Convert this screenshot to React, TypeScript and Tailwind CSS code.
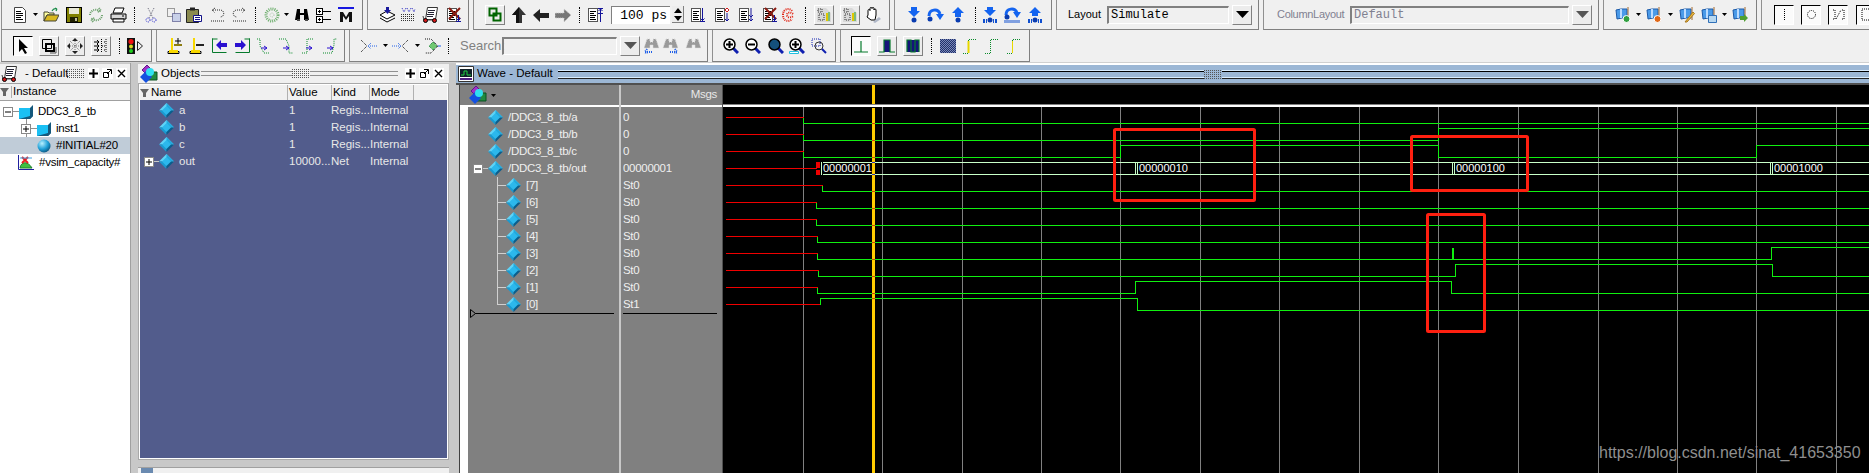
import type { ReactNode } from 'react';

type IcoProps = { className?: string; w?: number; h?: number; children?: ReactNode };
type P = { className?: string };

function Ico({ className = '', w = 16, h = 16, children }: IcoProps) {
  return (
    <svg width={w} height={h} viewBox={`0 0 ${w} ${h}`} className={`shrink-0 ${className}`} fill="none">
      {children}
    </svg>
  );
}

const dots = '1 1';

function Caret({ className = '' }: P) {
  return (
    <svg width="5" height="3" viewBox="0 0 5 3" className={`shrink-0 ${className}`}>
      <path d="M0 0h5L2.5 3z" fill="#000" />
    </svg>
  );
}

function Sep({ className = '' }: P) {
  return <div className={`h-[16px] w-px shrink-0 border-l border-dotted border-black ${className}`} />;
}

function Raised({ className = '', children }: { className?: string; children?: ReactNode }) {
  return (
    <div className={`flex h-[20px] w-[20px] shrink-0 items-center justify-center border border-t-white border-l-white border-r-[#808080] border-b-[#808080] bg-[#ececec] ${className}`}>
      {children}
    </div>
  );
}

function Pressed({ className = '', children }: { className?: string; children?: ReactNode }) {
  return (
    <div className={`flex h-[20px] w-[20px] shrink-0 items-center justify-center border border-t-black border-l-black border-r-white border-b-white bg-[#fbfbfb] ${className}`}>
      {children}
    </div>
  );
}

function ListDoc({ className = '', children }: { className?: string; children?: ReactNode }) {
  return (
    <Ico className={className}>
      <path d="M1.5 1.5h9v13h-9z" fill="#fff" stroke="#555" shapeRendering="crispEdges" />
      <path d="M3 4.5h6M3 6.5h4M3 8.5h6M3 10.5h5M3 12.5h6" stroke="#000" shapeRendering="crispEdges" />
      {children}
    </Ico>
  );
}

const NewDoc = ({ className }: P) => (
  <Ico className={className}>
    <path d="M2.5.5h8l3 3v12h-11z" fill="#fff" stroke="#444" />
    <path d="M4 4.5h5M4 6.5h7M4 8.5h7M4 10.5h5M4 12.5h7" stroke="#000" shapeRendering="crispEdges" />
  </Ico>
);
const OpenFolder = ({ className }: P) => (
  <Ico className={className}>
    <path d="M1 5h4l1 1h5v2H4l-3 6z" fill="#ffffa0" stroke="#443" />
    <path d="M1 14l3-6h12l-3 6z" fill="#d8b820" stroke="#443" />
    <path d="M9 4c1-2 3-3 5-2M14 2l-2-1M14 2l-1 2" stroke="#168a44" strokeWidth="1.2" />
  </Ico>
);
const Save = ({ className }: P) => (
  <Ico className={className}>
    <path d="M.5.5h15v15H.5z" fill="#808000" stroke="#000" shapeRendering="crispEdges" />
    <path d="M3 1h10v6H3z" fill="#e8e8d8" />
    <path d="M4 10h8v5H4z" fill="#202000" />
    <path d="M9 11h2v3H9z" fill="#c0c0a0" />
  </Ico>
);
const Refresh = ({ className }: P) => (
  <Ico className={className}>
    <path d="M2 8c0-4 5-7 10-4M11 1l2 3-4 1M14 8c0 4-5 7-10 4M5 15l-2-3 4-1" stroke="#6aa06a" strokeWidth="2" strokeDasharray={dots} />
  </Ico>
);
const Printer = ({ className }: P) => (
  <Ico className={className} w={17}>
    <path d="M5 1h9l-2 5H3z" fill="#fff" stroke="#000" />
    <path d="M1 7h15v5H1z" fill="#d8d8d8" stroke="#000" />
    <path d="M3 12h11v3H3z" fill="#fff" stroke="#000" />
    <path d="M12 9h2" stroke="#000" />
  </Ico>
);
const Cut = ({ className }: P) => (
  <Ico className={className}>
    <path d="M5 1l5 10M11 1L6 11" stroke="#667" strokeDasharray={dots} />
    <circle cx="5" cy="13" r="2" stroke="#22c" strokeDasharray={dots} />
    <circle cx="11" cy="13" r="2" stroke="#22c" strokeDasharray={dots} />
  </Ico>
);
const Copy = ({ className }: P) => (
  <Ico className={className}>
    <path d="M1.5 1.5h7v8h-7z" stroke="#444" strokeDasharray={dots} />
    <path d="M6.5 6.5h8v8h-8z" fill="#c8d0e8" stroke="#226" strokeDasharray={dots} />
  </Ico>
);
const Paste = ({ className }: P) => (
  <Ico className={className} w={18}>
    <path d="M1.5 2.5h12v13h-12z" fill="#8a8a50" stroke="#222" />
    <path d="M5 .5h5v3H5z" fill="#222" />
    <path d="M8.5 8.5h8v6h-8z" fill="#fff" stroke="#118" />
    <path d="M10 10.5h5M10 12.5h5" stroke="#118" />
  </Ico>
);
const Undo = ({ className, flip }: P & { flip?: boolean }) => (
  <Ico className={className}>
    <g transform={flip ? 'translate(16 0) scale(-1 1)' : undefined}>
      <path d="M3 3h7c5 0 5 7 0 7M1 14h13" stroke="#222" strokeDasharray={dots} />
      <path d="M5 1L2 3l3 3" stroke="#222" strokeDasharray={dots} />
    </g>
  </Ico>
);
const Compile = ({ className }: P) => (
  <Ico className={className}>
    <circle cx="8" cy="8" r="6" stroke="#70b070" strokeWidth="3" strokeDasharray={dots} />
    <circle cx="8" cy="8" r="2" stroke="#a8c8a8" strokeDasharray={dots} />
  </Ico>
);
const Binoculars = ({ className }: P) => (
  <Ico className={className}>
    <path d="M3 2h3v4h4V2h3l2 11H10V8H6v5H1z" fill="#000" />
    <path d="M3 13h3M11 13h3" stroke="#444" strokeWidth="2" />
  </Ico>
);
const Hier = ({ className }: P) => (
  <Ico className={className}>
    <path d="M.5 1.5h6v6h-6zM.5 9.5h6v6h-6z" fill="#fff" stroke="#000" shapeRendering="crispEdges" />
    <path d="M2 4.5h3M3.5 3v3M2 12.5h3M3.5 11v3M7 4.5h8M7 12.5h8" stroke="#000" shapeRendering="crispEdges" />
  </Ico>
);
const MIcon = ({ className }: P) => (
  <Ico className={className}>
    <path d="M0 0h16v2H0z" fill="#1818e0" />
    <path d="M2 15V5h3l3 5 3-5h3v10h-3V9l-3 4-3-4v6z" fill="#111" />
  </Ico>
);
const Stack = ({ className }: P) => (
  <Ico className={className} w={17}>
    <path d="M1 8l7-4 8 4-8 4zM1 11l7 4 8-4" fill="#fff" stroke="#000" />
    <path d="M7 0h3v3h2L8.5 7 5 3h2z" fill="#1a1a9c" />
  </Ico>
);
const DotGrid = ({ className }: P) => (
  <Ico className={className}>
    <path d="M1 7.5h14M1 9.5h14M1 11.5h14M1 13.5h14" stroke="#333" strokeDasharray={dots} />
    <path d="M2 1l2 4 2-4M7 1l2 4 2-4M12 1l2 4 1-3" stroke="#2828c0" strokeDasharray={dots} />
  </Ico>
);
const Wheels = ({ className }: P) => (
  <Ico className={className} w={17}>
    <path d="M5.5.5h10l-2 12h-10z" fill="#fff" stroke="#333" />
    <path d="M6 3.5h7M6 5.5h6M5 7.5h7M5 9.5h6" stroke="#223" />
    <path d="M1 9l1 4h12" stroke="#444" />
    <circle cx="3.5" cy="13.5" r="2" fill="#d01818" stroke="#000" />
    <circle cx="12.5" cy="13.5" r="2" fill="#d01818" stroke="#000" />
  </Ico>
);
const XDoc = ({ className }: P) => (
  <ListDoc className={className}>
    <path d="M3 1l11 11M14 1L3 12" stroke="#8a1a10" strokeWidth="2" />
    <path d="M12.5 8v6M10 14.5h5M10.5 11.5l2 2 2-2" stroke="#14149a" />
  </ListDoc>
);
const Link = ({ className }: P) => (
  <Raised className={className}>
    <Ico w={14} h={15}>
      <path d="M1.5 1.5h7v7h-7zM5.5 6.5h7v7h-7z" stroke="#006400" strokeWidth="2" />
    </Ico>
  </Raised>
);
const UpArrow = ({ className }: P) => (
  <Ico className={className}>
    <path d="M8 0l7 8h-4v8H5V8H1z" fill="#333" />
    <path d="M8 0L1 8h4v8h3z" fill="#111" />
  </Ico>
);
const LeftArrow = ({ className }: P) => (
  <Ico className={className}>
    <path d="M0 8l7-6v4h9v5H7v4z" fill="#222" />
  </Ico>
);
const RightArrow = ({ className }: P) => (
  <Ico className={className}>
    <path d="M16 8L9 2v4H0v5h9v4z" fill="#777" stroke="#ccc" strokeDasharray={dots} />
  </Ico>
);
const DownMark = ({ c = '#14149a' }: { c?: string }) => <path d="M12.5 1v13M10 14.5h5M10.5 11.5l2 2 2-2" stroke={c} />;
const ListUp = ({ className }: P) => (
  <ListDoc className={className}>
    <path d="M13.5 1v14M11 1.5h5M11.5 4l2-2 2 2M11 6.5h5" stroke="#14149a" />
  </ListDoc>
);
const ListDown = ({ className }: P) => (
  <ListDoc className={className}>
    <DownMark />
  </ListDoc>
);
const ListDiamond = ({ className }: P) => (
  <ListDoc className={className}>
    <path d="M13 1l2 2-2 2-2-2z" fill="#fff" stroke="#d01818" />
    <path d="M13 6v8M11 12l2 2 2-2" stroke="#14149a" />
  </ListDoc>
);
const ListDouble = ({ className }: P) => (
  <ListDoc className={className}>
    <path d="M13 1v13M11 8l2 2 2-2M11 12l2 2 2-2" stroke="#14149a" />
  </ListDoc>
);
const RedC = ({ className }: P) => (
  <Ico className={className}>
    <path d="M12 4c-2-3-9-3-9 4s7 7 9 4M13 7c-2-2-6-2-6 1s4 3 6 1" stroke="#e02010" strokeWidth="2" strokeDasharray={dots} />
  </Ico>
);
const WavePage = ({ className }: P) => (
  <Raised className={className}>
    <Ico>
      <path d="M1 1h9l5 5v9H1z" fill="#d8d8d8" />
      <path d="M2 2h4v3H2zM3 7h5v6H3z" stroke="#333" strokeDasharray={dots} />
      <path d="M11 6v8" stroke="#e0c800" strokeWidth="2" />
      <path d="M13 5v9" stroke="#20a020" />
    </Ico>
  </Raised>
);
const Hand = ({ className }: P) => (
  <Ico className={className}>
    <path d="M3 8V3.5a1 1 0 012 0V1.5a1 1 0 012 0a1 1 0 012 0V3a1 1 0 012 0v5l-1 5H6L2 10z" fill="#fff" stroke="#000" />
    <path d="M8 15l6-5 2 2-6 4z" fill="#b0b8c8" />
  </Ico>
);
const StepDown = ({ className }: P) => (
  <Ico className={className}>
    <path d="M5 0h6v4h3L8 10 2 4h3z" fill="#1464f0" />
    <circle cx="8" cy="13" r="2.5" fill="#0a3cb0" />
  </Ico>
);
const StepOver = ({ className }: P) => (
  <Ico className={className} w={18}>
    <path d="M3 9c0-7 9-8 11-2" stroke="#1464f0" strokeWidth="3" />
    <path d="M10 7h8l-4 6z" fill="#1464f0" />
    <circle cx="4" cy="12" r="2.5" fill="#0a3cb0" />
  </Ico>
);
const StepUp = ({ className }: P) => (
  <Ico className={className}>
    <path d="M8 0l6 6h-3v4H5V6H2z" fill="#1464f0" />
    <circle cx="8" cy="13" r="2.5" fill="#0a3cb0" />
  </Ico>
);
const Bars = () => <path d="M1 12h2v4H1zM13 12h2v4h-2zM4 12h1v4H4zM11 12h1v4h-1z" fill="#1050d0" />;
const StepDownBar = ({ className }: P) => (
  <Ico className={className}>
    <path d="M5 0h6v3h3L8 9 2 3h3z" fill="#1464f0" />
    <circle cx="8" cy="13" r="2.5" fill="#0a3cb0" />
    <Bars />
  </Ico>
);
const StepOverBar = ({ className }: P) => (
  <Ico className={className} w={18}>
    <path d="M3 8c0-7 9-8 11-2" stroke="#1464f0" strokeWidth="3" />
    <path d="M10 5h8l-4 6z" fill="#1464f0" />
    <circle cx="4" cy="10" r="2.5" fill="#0a3cb0" />
    <path d="M2 13v3M4 13v3M6 13v3M8 13v3M10 13v3M12 13v3M14 13v3M16 13v3" stroke="#1050d0" />
  </Ico>
);
const StepUpBar = ({ className }: P) => (
  <Ico className={className}>
    <path d="M8 0l6 6h-3v3H5V6H2z" fill="#1464f0" />
    <circle cx="8" cy="13" r="2.5" fill="#0a3cb0" />
    <Bars />
  </Ico>
);
const Flag = ({ className, children }: { className?: string; children?: ReactNode }) => (
  <Ico className={className}>
    <path d="M1 3l5-1 6 0 0 9-5 0-5 1z" fill="#4a9ae8" stroke="#1c5aa8" />
    <path d="M6 2v9" stroke="#bcdcff" strokeWidth="2" />
    <path d="M13 0v13" stroke="#a06830" />
    {children}
  </Ico>
);
const PressedGlyph = ({ className, children }: { className?: string; children?: ReactNode }) => (
  <Pressed className={`w-[19px] ${className ?? ''}`}>
    <Ico w={13} h={13}>
      {children}
    </Ico>
  </Pressed>
);
const ArrowSelect = () => (
  <Ico>
    <path d="M4 1l9 9H9l3 5-2 1-3-5-3 3z" fill="#000" />
  </Ico>
);
const Resize = () => (
  <Ico>
    <path d="M1.5 1.5h9v9h-9z" stroke="#000" />
    <path d="M5 6h8v7H5z" stroke="#000" strokeWidth="2" />
    <path d="M15 9v6H9" stroke="#555" />
  </Ico>
);
const Move = () => (
  <Ico>
    <path d="M8 0l3 3H5zM8 16l3-3H5zM0 8l3-3v6zM16 8l-3-3v6z" fill="#222" />
    <path d="M8 3v10M3 8h10M3 3l10 10M13 3L3 13" stroke="#777" strokeDasharray={dots} />
  </Ico>
);
const Bracket = () => (
  <Ico>
    <path d="M1 4h5M1 8h5M1 12h5M4 2l2 2-2 2M4 6l2 2-2 2M4 10l2 2-2 2" stroke="#000" />
    <path d="M8.5 1v14M9 8h4M13 1v14M11 4h2M11 12h2" stroke="#000" strokeDasharray={dots} />
  </Ico>
);
const Traffic = ({ className }: P) => (
  <Ico className={className} w={17} h={16}>
    <path d="M0 0h8v16H0z" fill="#111" />
    <circle cx="4" cy="3.5" r="2.6" fill="#f01010" />
    <circle cx="4" cy="8.5" r="2" fill="#d8d820" />
    <circle cx="4" cy="13" r="2" fill="#20d020" />
    <path d="M10.5 3.5l5 4.5-5 4.5z" stroke="#222" />
  </Ico>
);
const YellowCursor = ({ className, plus }: P & { plus?: boolean }) => (
  <Ico className={className} h={17}>
    <path d="M5 1v12M1 14.5h11v2H1z" stroke="#000" />
    <path d="M4 1h2v13H4zM2 13h9v3H2z" fill="#f8d800" />
    <path d="M7 8h8" stroke="#222" strokeWidth="2" />
    {plus && <path d="M11 1v6M8 4h6" stroke="#000" />}
    {plus && <path d="M7 8h8" stroke="#f8d800" />}
  </Ico>
);
const GreenStep = ({ className, dir }: P & { dir: 'l' | 'r' }) => (
  <Ico className={className} w={16}>
    <g transform={dir === 'r' ? 'translate(16 0) scale(-1 1)' : undefined}>
      <path d="M.5 1v13.5H14M.5 1H5" stroke="#067a2c" strokeLinecap="square" />
      <path d="M4 7l5-5v3h6v4H9v3z" fill="#2a10d0" />
    </g>
  </Ico>
);
const DotStep = ({ className, d }: P & { d: string }) => (
  <Ico className={className}>
    <path d={d} stroke="#0a8a2a" strokeDasharray={dots} />
    <path d="M5 10h6M8 8l3 2-3 2" stroke="#2a10d0" />
  </Ico>
);
const ForkLeft = ({ className }: P) => (
  <Ico className={className}>
    <path d="M0 2l6 6-6 6" stroke="#111" strokeDasharray={dots} />
    <path d="M7 8h9M10 5L7 8l3 3" stroke="#2060e8" strokeDasharray={dots} />
  </Ico>
);
const ForkRight = ({ className }: P) => (
  <Ico className={className}>
    <path d="M16 2l-6 6 6 6" stroke="#111" strokeDasharray={dots} />
    <path d="M0 8h9M6 5l3 3-3 3" stroke="#2060e8" strokeDasharray={dots} />
  </Ico>
);
const DiamondDots = ({ className }: P) => (
  <Ico className={className} w={18}>
    <path d="M1 1h6l7 7-7 7H1" stroke="#111" strokeDasharray={dots} />
    <path d="M9 4l4 4-4 4-4-4z" fill="#70c870" stroke="#0a7a2a" strokeDasharray={dots} />
    <path d="M14 8h3" stroke="#2060e8" />
  </Ico>
);
const SearchArrow = ({ className, flip, mirror }: P & { flip?: boolean; mirror?: boolean }) => (
  <Ico className={className}>
    <g transform={flip ? 'translate(16 0) scale(-1 1)' : undefined}>
      <path d="M3 1h3v3h3V1h3l3 9H9V7H6v3H0z" fill="#9a9a9a" stroke="#ddd" strokeDasharray={dots} />
      {!mirror && <path d="M1 14h7M3 11l-2 3 2 2" stroke="#2060e8" strokeDasharray={dots} strokeWidth="2" />}
    </g>
  </Ico>
);
const Lens = ({ className, sym, fill = '#fff', ring }: P & { sym?: string; fill?: string; ring?: boolean }) => (
  <Ico className={className}>
    <path d="M10 10l5 5" stroke="#1020b0" strokeWidth="3" />
    <circle cx="6.5" cy="6.5" r="5.5" fill={fill} stroke="#000" strokeWidth="1.5" />
    {sym && <path d={sym} stroke="#000" strokeWidth="2" />}
    {ring && <path d="M.5 13.5h9v2h-9z" fill="#fff" stroke="#20c0e0" />}
  </Ico>
);
const ZoomDash = ({ className }: P) => (
  <Ico className={className}>
    <path d="M1 1h8v7H1z" stroke="#1020b0" strokeDasharray={dots} />
    <circle cx="8" cy="8" r="4" stroke="#333" />
    <path d="M11 11l4 4" stroke="#1020b0" strokeWidth="2" />
  </Ico>
);
const Pulse = ({ d, fill }: { d: string; fill?: string }) => (
  <Ico>
    {fill && <path d={fill} fill="#14147a" />}
    <path d={d} stroke="#067a2c" strokeWidth="1.2" />
  </Ico>
);
const Checker = ({ className }: P) => (
  <Ico className={className}>
    <path d="M0 1h16v14H0z" fill="#7a88b8" />
    <path d="M0 1.5h16M0 3.5h16M0 5.5h16M0 7.5h16M0 9.5h16M0 11.5h16M0 13.5h16" stroke="#20306a" strokeDasharray={dots} />
    <path d="M1 2.5h16M1 4.5h16M1 6.5h16M1 8.5h16M1 10.5h16M1 12.5h16M1 14.5h16" stroke="#20306a" strokeDasharray={dots} />
  </Ico>
);
const YellowStep = ({ className, bar, y = true }: P & { bar?: boolean; y?: boolean }) => (
  <Ico className={className}>
    <path d="M1 15.5h6M6.5 15V1.5M7 1.5h7" stroke="#0a8a2a" strokeDasharray={dots} />
    {y && <path d="M6.5 3v12" stroke="#e8d800" strokeWidth={bar ? 2 : 1} />}
  </Ico>
);
const SignalDiamond = ({ className }: P) => (
  <svg width="15" height="15" viewBox="0 0 15 15" className={`shrink-0 ${className ?? ''}`}>
    <path d="M7.5 0L0 7.5h15z" fill="#5fd4f8" />
    <path d="M7.5 0L15 7.5H7.5z" fill="#22a8dc" />
    <path d="M0 7.5L7.5 15V7.5z" fill="#1a9ad0" />
    <path d="M15 7.5L7.5 15V7.5z" fill="#0a5e8c" />
    <path d="M7.5 3L3 7.5l4.5 4.5 4.5-4.5z" fill="#2cb8ec" />
  </svg>
);
const ObjectsIcon = ({ className }: P) => (
  <Ico className={className} w={18} h={18}>
    <path d="M7 0l5 5-5 5-5-5z" fill="#a030c8" stroke="#601888" />
    <path d="M8 7h9v8H8z" fill="#208a40" stroke="#0a5020" />
    <path d="M6 6l6 6-6 6-6-6z" fill="#1450e0" />
    <circle cx="10" cy="7" r="4" fill="#30e0f0" />
  </Ico>
);
const WaveIcon = ({ className }: P) => (
  <Ico className={className} w={16} h={16}>
    <path d="M.5.5h15v15H.5z" fill="#fff" stroke="#333" />
    <path d="M2 3h12v8H2z" fill="#102028" />
    <path d="M3 9h3V5h3v4h4" stroke="#20d040" />
    <path d="M2 12h12v2H2z" fill="#502080" />
  </Ico>
);
const Expander = ({ minus, className }: { minus?: boolean; className?: string }) => (
  <span className={`flex h-[10px] w-[10px] shrink-0 items-center justify-center border border-[#888] bg-white ${className ?? ''}`}>
    <svg width="6" height="6" viewBox="0 0 6 6">
      <path d={minus ? 'M0 3h6' : 'M0 3h6M3 0v6'} stroke="#000" strokeWidth="1" />
    </svg>
  </span>
);
const BoxIcon = ({ className }: P) => (
  <Ico className={className} w={14} h={14}>
    <path d="M0 3h11v11H0z" fill="#1ac0f4" />
    <path d="M11 3l3-3v11l-3 3z" fill="#14587c" />
    <path d="M0 14h11l3-3H11z" fill="#14587c" />
    <path d="M11 3v11H8l3-3V3z" fill="#14587c" />
  </Ico>
);

function Block({ className = '', first, children }: { className?: string; first?: boolean; children?: ReactNode }) {
  return (
    <div className={`flex h-full shrink-0 ${first ? 'pl-px' : 'pl-1'} ${className}`}>
      <div className="flex min-w-0 flex-1 items-center border-r border-b border-l border-r-[#808080] border-b-[#808080] border-l-[#909090]">
        {children}
      </div>
    </div>
  );
}

const bits = ['[7]', '[6]', '[5]', '[4]', '[3]', '[2]', '[1]', '[0]'];
const traces = [
  'M803 117V123H1869',
  'M803 134V140H1438V128H1869',
  'M803 151V157H1120V145H1438V157H1756V145H1869',
  'M822 185V191H1869',
  'M816 202V208H1869',
  'M816 219V225H1869',
  'M817 236V242H1869',
  'M817 253V259H1771V247H1869',
  'M818 270V276H1455V264H1772V276H1869',
  'M817 287V293H1135V281H1451V293H1869',
  'M820 304V298H1137V310H1869',
];
const reds: [number, number][] = [
  [117, 803], [134, 803], [151, 803], [168, 816], [185, 822], [202, 816],
  [219, 816], [236, 817], [253, 817], [270, 818], [287, 817], [304, 820],
];
const grid = [803, 882, 962, 1041, 1120, 1200, 1279, 1359, 1438, 1518, 1598, 1677, 1756, 1836];
const busMarks = [1136, 1453, 1771];
const busLabels: [number, string][] = [
  [823, '00000001'],
  [1139, '00000010'],
  [1456, '00000100'],
  [1774, '00001000'],
];
const cursorHits = [123, 140, 157, 191, 208, 225, 242, 259, 276, 293, 298];

function WavePlot() {
  return (
    <svg width="1146" height="388" viewBox="723 85 1146 388" className="block shrink-0" fontFamily='"Liberation Sans", sans-serif'>
      <rect x="723" y="85" width="1146" height="388" fill="#000" />
      <rect x="723" y="104" width="1146" height="1" fill="#808080" />
      <rect x="723" y="105" width="1146" height="2" fill="#fff" />
      {grid.map((x) => (
        <rect key={x} x={x} y="107" width="1" height="366" fill="#808080" />
      ))}
      <g transform="translate(0.5 0.5)" shapeRendering="crispEdges" fill="none">
        {reds.map(([y, x]) => (
          <path key={y} d={`M725 ${y}H${x}`} stroke="#f00000" />
        ))}
        {traces.map((d) => (
          <path key={d} d={d} stroke="#10f010" />
        ))}
        <path d="M822 162H1869M822 174H1869" stroke="#c8ffc8" />
      </g>
      <rect x="816" y="162" width="4" height="6" fill="#f00000" />
      <rect x="816" y="170" width="4" height="5" fill="#f00000" />
      <rect x="821" y="162" width="1" height="13" fill="#c8ffc8" />
      <rect x="1452" y="248" width="2" height="11" fill="#10f010" />
      {busMarks.map((x) => (
        <g key={x} fill="#c8ffc8">
          <rect x={x - 1} y="162" width="1" height="13" />
          <rect x={x + 1} y="162" width="1" height="13" />
        </g>
      ))}
      {busLabels.map(([x, t]) => (
        <text key={t} x={x} y="172" fontSize="11" fill="#fff">
          {t}
        </text>
      ))}
      <rect x="872" y="85" width="3" height="19" fill="#ffcc00" />
      <rect x="872" y="108" width="3" height="365" fill="#ffcc00" />
      {cursorHits.map((y) => (
        <rect key={y} x="872" y={y} width="3" height="1" fill="#d04010" />
      ))}
      <rect x="872" y="162" width="3" height="1" fill="#3030c0" />
      <rect x="872" y="174" width="3" height="1" fill="#3030c0" />
      <g fill="none" stroke="#ff2010" strokeWidth="3">
        <rect x="1114.5" y="129.5" width="140" height="71" rx="1" />
        <rect x="1411.5" y="136.5" width="116" height="54" rx="1" />
        <rect x="1427.5" y="214.5" width="57" height="117" rx="1" />
      </g>
    </svg>
  );
}

function WinButtons({ className = '' }: P) {
  return (
    <div className={`flex shrink-0 items-center gap-[3px] ${className}`}>
      <span className="flex h-[11px] w-[11px] items-center justify-center bg-white">
        <svg width="9" height="9" viewBox="0 0 9 9"><path d="M0 4.5h9M4.5 0v9" stroke="#000" strokeWidth="2" /></svg>
      </span>
      <span className="flex h-[11px] w-[11px] items-center justify-center bg-white">
        <svg width="9" height="9" viewBox="0 0 9 9"><path d="M.5 3.5h5v5h-5zM4 .5h4.5V5M4 5l4-4" stroke="#000" fill="none" /></svg>
      </span>
      <span className="flex h-[11px] w-[11px] items-center justify-center bg-white">
        <svg width="9" height="9" viewBox="0 0 9 9"><path d="M1 1l7 7M8 1L1 8" stroke="#000" strokeWidth="1.4" /></svg>
      </span>
    </div>
  );
}

function Grip({ className = '' }: P) {
  return (
    <svg width="18" height="9" viewBox="0 0 18 9" className={`shrink-0 ${className}`}>
      <path d="M0 .5h18M0 2.5h18M0 4.5h18M0 6.5h18M0 8.5h18" stroke="#555" strokeDasharray="1 1" />
    </svg>
  );
}

function FilterMark() {
  return (
    <svg width="9" height="10" viewBox="0 0 9 10" className="shrink-0">
      <path d="M0 1h9L6 5v4H3V5z" fill="#666" />
    </svg>
  );
}

function TreeRow({ className = '', children }: { className?: string; children?: ReactNode }) {
  return <div className={`flex h-[17px] items-center ${className}`}>{children}</div>;
}

const objectRows = [
  { name: 'a', value: '1', kind: 'Regis...' },
  { name: 'b', value: '1', kind: 'Regis...' },
  { name: 'c', value: '1', kind: 'Regis...' },
  { name: 'out', value: '10000...', kind: 'Net' },
];

export default function App() {
  return (
    <div className='flex h-[473px] w-[1869px] flex-col overflow-hidden bg-[#f0f0f0] text-[11.5px] leading-none text-black [font-family:"Liberation_Sans",sans-serif]'>
      <div className="flex h-[30px] shrink-0">
        <Block first className="w-[363px]">
          <NewDoc className="ml-[10px]" />
          <Caret className="ml-[5px]" />
          <OpenFolder className="ml-[5px]" />
          <Save className="ml-[7px]" />
          <Refresh className="ml-[6px]" />
          <Printer className="ml-[6px]" />
          <Sep className="ml-[7px]" />
          <Cut className="ml-[8px]" />
          <Copy className="ml-[7px]" />
          <Paste className="ml-[3px]" />
          <Undo className="ml-[7px]" />
          <Undo flip className="ml-[5px]" />
          <Sep className="ml-[8px]" />
          <Compile className="ml-[8px]" />
          <Caret className="ml-[4px]" />
          <Binoculars className="ml-[5px]" />
          <Hier className="ml-[6px]" />
          <MIcon className="ml-[6px]" />
        </Block>
        <Block className="w-[106px]">
          <Stack className="ml-[11px]" />
          <DotGrid className="ml-[4px]" />
          <Wheels className="ml-[6px]" />
          <XDoc className="ml-[7px]" />
        </Block>
        <Block className="w-[421px]">
          <Link className="ml-[11px]" />
          <UpArrow className="ml-[6px]" />
          <LeftArrow className="ml-[6px]" />
          <RightArrow className="ml-[6px]" />
          <Sep className="ml-[8px]" />
          <ListUp className="ml-[7px]" />
          <div className="ml-[8px] flex h-[18px] w-[59px] shrink-0 items-center justify-end border-t border-l border-t-[#808080] border-l-[#808080] bg-white pr-[3px] [font-family:'Liberation_Mono',monospace] text-[13px]">
            100 ps
          </div>
          <div className="ml-[2px] flex h-[17px] w-[12px] shrink-0 flex-col items-center justify-around border-r border-b border-[#808080] bg-[#ececec]">
            <svg width="8" height="5" viewBox="0 0 8 5"><path d="M4 0l4 5H0z" fill="#000" /></svg>
            <svg width="8" height="5" viewBox="0 0 8 5"><path d="M0 0h8L4 5z" fill="#000" /></svg>
          </div>
          <ListDown className="ml-[6px]" />
          <ListDiamond className="ml-[8px]" />
          <ListDouble className="ml-[8px]" />
          <XDoc className="ml-[8px]" />
          <RedC className="ml-[2px]" />
          <Sep className="ml-[9px]" />
          <WavePage className="ml-[8px]" />
          <WavePage className="ml-[6px]" />
          <Hand className="ml-[5px]" />
        </Block>
        <Block className="w-[162px]">
          <StepDown className="ml-[11px]" />
          <StepOver className="ml-[4px]" />
          <StepUp className="ml-[6px]" />
          <Sep className="ml-[9px]" />
          <StepDownBar className="ml-[6px]" />
          <StepOverBar className="ml-[5px]" />
          <StepUpBar className="ml-[6px]" />
        </Block>
        <Block className="w-[207px]">
          <span className="ml-[11px] w-[39px] shrink-0 text-[11px]">Layout</span>
          <div className="flex h-[18px] w-[122px] shrink-0 items-center border-t-2 border-r border-b border-l-2 border-t-[#808080] border-r-white border-b-white border-l-[#808080] pl-[2px] [font-family:'Liberation_Mono',monospace] text-[12px]">
            Simulate
          </div>
          <Raised className="ml-[3px] h-[18px] w-[17px] border-r-[#707070] border-b-[#707070]">
            <svg width="13" height="7" viewBox="0 0 13 7"><path d="M0 0h13L6.5 7z" fill="#000" /></svg>
          </Raised>
        </Block>
        <Block className="w-[340px]">
          <span className="ml-[13px] w-[73px] shrink-0 text-[11px] tracking-[-0.3px] text-[#808090]">ColumnLayout</span>
          <div className="flex h-[18px] w-[219px] shrink-0 items-center border-t-2 border-r border-b border-l-2 border-t-[#808080] border-r-white border-b-white border-l-[#808080] pl-[2px] [font-family:'Liberation_Mono',monospace] text-[12px] text-[#808090]">
            Default
          </div>
          <Raised className="ml-[3px] h-[18px] w-[17px] border-r-[#707070] border-b-[#707070]">
            <svg width="13" height="7" viewBox="0 0 13 7"><path d="M0 0h13L6.5 7z" fill="#555" /></svg>
          </Raised>
        </Block>
        <Block className="w-[158px]">
          <Flag className="ml-[11px]">
            <circle cx="11.5" cy="12" r="3.5" fill="#30a040" stroke="#fff" />
          </Flag>
          <Caret className="ml-[5px]" />
          <Flag className="ml-[5px]">
            <circle cx="11.5" cy="12" r="3.5" fill="#e06818" stroke="#fff" />
          </Flag>
          <Caret className="ml-[6px]" />
          <Flag className="ml-[6px]">
            <path d="M6 15l8-10 1.5 1.5L8 15z" fill="#e8b840" stroke="#a87820" />
          </Flag>
          <Flag className="ml-[6px]">
            <path d="M7.5 8.5h8v7h-8z" fill="#b8d8f0" stroke="#3070b8" />
          </Flag>
          <Caret className="ml-[5px]" />
          <Flag className="ml-[5px]">
            <path d="M8 9h4V7l4 4-4 4v-2H8z" fill="#50a030" />
          </Flag>
        </Block>
        <div className="flex h-full flex-1 pl-1">
          <div className="flex flex-1 items-center border-b border-l border-b-[#808080] border-l-[#909090]">
            <PressedGlyph className="ml-[12px]">
              <path d="M6.5 1v11" stroke="#000" strokeDasharray={dots} />
            </PressedGlyph>
            <PressedGlyph className="ml-[7px]">
              <circle cx="6.5" cy="6.5" r="4" stroke="#000" strokeDasharray={dots} />
            </PressedGlyph>
            <PressedGlyph className="ml-[7px]">
              <path d="M1 2h2v9H1M10 2h2v9h-2M4 11l5-9" stroke="#000" strokeDasharray={dots} />
            </PressedGlyph>
            <PressedGlyph className="ml-[8px]">
              <path d="M2 1h8v11H2z" stroke="#000" strokeDasharray={dots} />
            </PressedGlyph>
          </div>
        </div>
      </div>

      <div className="flex h-[32px] shrink-0">
        <Block first className="w-[152px]">
          <Pressed className="ml-[11px]"><ArrowSelect /></Pressed>
          <Raised className="ml-[6px]"><Resize /></Raised>
          <Raised className="ml-[6px]"><Move /></Raised>
          <Raised className="ml-[6px]"><Bracket /></Raised>
          <Sep className="ml-[8px]" />
          <Traffic className="ml-[7px]" />
        </Block>
        <Block className="w-[193px]">
          <YellowCursor plus className="ml-[10px]" />
          <YellowCursor className="ml-[6px]" />
          <GreenStep dir="l" className="ml-[7px]" />
          <GreenStep dir="r" className="ml-[6px]" />
          <DotStep d="M1 1h3v7l4 7h5" className="ml-[6px]" />
          <DotStep d="M1 1h7l3 7v7h4" className="ml-[6px]" />
          <DotStep d="M1 15h5V1h7" className="ml-[7px]" />
          <DotStep d="M1 15h9l2-8V1h3" className="ml-[5px]" />
        </Block>
        <Block className="w-[363px]">
          <ForkLeft className="ml-[11px]" />
          <Caret className="ml-[6px]" />
          <ForkRight className="ml-[4px]" />
          <Caret className="ml-[7px]" />
          <DiamondDots className="ml-[4px]" />
          <Sep className="ml-[6px]" />
          <span className="ml-[11px] w-[42px] shrink-0 text-[13px] text-[#808080]">Search:</span>
          <div className="h-[18px] w-[115px] shrink-0 border-t-2 border-r border-b border-l-2 border-t-[#808080] border-r-white border-b-white border-l-[#808080]" />
          <Raised className="ml-[3px] h-[18px] w-[17px] border-r-[#707070] border-b-[#707070]">
            <svg width="13" height="7" viewBox="0 0 13 7"><path d="M0 0h13L6.5 7z" fill="#555" /></svg>
          </Raised>
          <SearchArrow className="ml-[4px]" />
          <SearchArrow flip className="ml-[2px]" />
          <SearchArrow flip mirror className="ml-[7px]" />
        </Block>
        <Block className="w-[128px]">
          <Lens sym="M3 6.5h7M6.5 3v7" className="ml-[10px]" />
          <Lens sym="M3 6.5h7" className="ml-[6px]" />
          <Lens fill="#14507c" className="ml-[7px]" />
          <Lens sym="M3 6.5h7M6.5 3v7" ring className="ml-[5px]" />
          <ZoomDash className="ml-[6px]" />
        </Block>
        <Block className="w-[194px]">
          <Pressed className="ml-[10px]"><Pulse d="M1 14h14M8 3v11" /></Pressed>
          <Raised className="ml-[6px]"><Pulse d="M0 14h5V2h6v12h5" fill="M5 2h6v12H5z" /></Raised>
          <Raised className="ml-[6px]"><Pulse d="M2 14V2h4v12h4V2h4v12" fill="M2 2h12v12H2z" /></Raised>
          <Sep className="ml-[8px]" />
          <Checker className="ml-[8px]" />
          <YellowStep bar className="ml-[6px]" />
          <YellowStep y={false} className="ml-[6px]" />
          <YellowStep className="ml-[6px]" />
        </Block>
      </div>
      <div className="h-px shrink-0 bg-[#d0d0d0]" />

      <div className="flex min-h-0 flex-1 bg-[#c8c8c8]">
        <div className="flex w-[131px] shrink-0 flex-col border-r border-[#a0a0a0] bg-white">
          <div className="h-px bg-[#c8c8c8]" />
          <div className="flex h-[19px] items-center bg-[#f0f0f0]">
            <Wheels className="ml-px" />
            <span className="ml-[7px] w-[39px] shrink-0 whitespace-nowrap">- Default</span>
            <Grip className="ml-[3px]" />
            <WinButtons className="ml-[3px]" />
          </div>
          <div className="flex h-[18px] items-center border-t border-b border-[#a0a0a0] bg-[#f0f0f0]">
            <FilterMark />
            <span className="ml-[2px] border-l border-[#b0b0b0] pl-px">Instance</span>
          </div>
          <div className="relative pt-[2px] tracking-[-0.25px]">
            <div className="absolute top-[18px] left-[26px] h-[27px] w-px bg-[#909090]" />
            <div className="absolute top-[44px] left-[26px] h-px w-[12px] bg-[#909090]" />
            <TreeRow>
              <Expander minus className="ml-[3px]" />
              <span className="h-px w-[6px] bg-[#909090]" />
              <BoxIcon />
              <span className="ml-[5px] whitespace-nowrap">DDC3_8_tb</span>
            </TreeRow>
            <TreeRow>
              <Expander className="relative ml-[21px]" />
              <span className="h-px w-[6px] bg-[#909090]" />
              <BoxIcon />
              <span className="ml-[5px]">inst1</span>
            </TreeRow>
            <TreeRow className="relative bg-[#c0ccd8]">
              <svg width="14" height="14" viewBox="0 0 14 14" className="ml-[37px] shrink-0">
                <defs>
                  <radialGradient id="ball" cx="0.35" cy="0.3" r="0.8">
                    <stop offset="0" stopColor="#b8f0ff" />
                    <stop offset="0.55" stopColor="#20a0d8" />
                    <stop offset="1" stopColor="#0a4a70" />
                  </radialGradient>
                </defs>
                <circle cx="7" cy="7" r="6.5" fill="url(#ball)" />
              </svg>
              <span className="ml-[5px] whitespace-nowrap">#INITIAL#20</span>
            </TreeRow>
            <TreeRow>
              <Ico className="ml-[18px]" w={16} h={15}>
                <path d="M.5 0v14.5H16" stroke="#2020a0" />
                <path d="M2 13c1-7 8-7 12 0z" fill="#40c040" stroke="#208030" />
                <path d="M4 2l6 6M10 2L4 8" stroke="#e82020" strokeWidth="2" />
                <path d="M2 3h12" stroke="#40a0e0" />
              </Ico>
              <span className="ml-[5px] whitespace-nowrap">#vsim_capacity#</span>
            </TreeRow>
          </div>
        </div>

        <div className="ml-[7px] flex w-[311px] shrink-0 flex-col">
          <div className="h-px" />
          <div className="flex h-[19px] items-center bg-[#f0f0f0]">
            <ObjectsIcon className="ml-[2px]" />
            <span className="ml-[3px] w-[40px] shrink-0">Objects</span>
            <div className="h-[5px] w-[91px] shrink-0 border-t border-b border-[#909090]" />
            <Grip />
            <div className="h-[5px] w-[88px] shrink-0 border-t border-b border-[#909090]" />
            <WinButtons className="ml-[7px]" />
          </div>
          <div className="flex min-h-0 flex-1 flex-col border border-[#a8a8a8] bg-white p-px">
            <div className="flex h-[15px] shrink-0 items-center bg-[#f0f0f0]">
              <div className="flex h-full w-[148px] shrink-0 items-center border-r border-[#b0b0b0]">
                <FilterMark />
                <span className="ml-[2px]">Name</span>
              </div>
              <span className="flex h-full w-[44px] shrink-0 items-center border-r border-[#b0b0b0] pl-px">Value</span>
              <span className="flex h-full w-[38px] shrink-0 items-center border-r border-[#b0b0b0] pl-px">Kind</span>
              <span className="flex h-full w-[44px] shrink-0 items-center border-r border-[#b0b0b0] pl-px">Mode</span>
            </div>
            <div className="min-h-0 flex-1 bg-[#525c8c] pt-[2px] text-[#e8e8e8]">
              {objectRows.map((r) => (
                <div key={r.name} className="flex h-[17px] items-center">
                  <div className="flex w-[147px] shrink-0 items-center pl-[4px]">
                    {r.name === 'out' ? <Expander /> : <span className="w-[10px] shrink-0" />}
                    <span className={`h-px w-[5px] shrink-0 ${r.name === 'out' ? 'bg-[#c8c8c8]' : ''}`} />
                    <SignalDiamond />
                    <span className="ml-[5px]">{r.name}</span>
                  </div>
                  <span className="w-[44px] shrink-0 pl-[2px] whitespace-nowrap">{r.value}</span>
                  <span className="w-[38px] shrink-0 whitespace-nowrap">{r.kind}</span>
                  <span className="shrink-0 pl-px">Internal</span>
                </div>
              ))}
            </div>
          </div>
          <div className="mt-[7px] flex h-[6px] shrink-0 items-start border-t border-[#a0a0a0] bg-[#f0f0f0] pl-[3px]">
            <div className="h-[5px] w-[12px] bg-[#6a8ab0]" />
          </div>
        </div>

        <div className="ml-[7px] flex min-w-0 flex-1 flex-col">
          <div className="h-[2px] shrink-0 bg-white" />
          <div className="relative flex h-[18px] shrink-0 items-center overflow-hidden bg-[#9cb7d5]">
            <WaveIcon className="ml-[2px]" />
            <span className="ml-[3px] shrink-0">Wave - Default</span>
            <div className="ml-[5px] flex h-[9px] flex-1 flex-col justify-between">
              <div className="h-[2px] border-t border-[#d8ecff] bg-black" />
              <div className="h-[2px] border-t border-[#d8ecff] bg-[#222]" />
            </div>
            <Grip className="absolute top-[5px] left-[748px] bg-[#9cb7d5]" />
          </div>
          <div className="flex min-h-0 flex-1 border-t-2 border-[#505050]">
            <div className="ml-[3px] flex w-[160px] shrink-0 flex-col border-l border-[#404040] bg-white">
              <div className="flex h-[20px] shrink-0 items-center bg-[#808080] pl-[9px]">
                <ObjectsIcon />
                <Caret className="ml-[4px]" />
              </div>
              <div className="h-[2px] shrink-0 bg-white" />
              <div className="ml-[8px] flex-1 bg-[#808080] pt-[2px] tracking-[-0.3px] text-[#efefef]">
                {['/DDC3_8_tb/a', '/DDC3_8_tb/b', '/DDC3_8_tb/c'].map((n) => (
                  <TreeRow key={n} className="pl-[20px]">
                    <SignalDiamond />
                    <span className="ml-[5px]">{n}</span>
                  </TreeRow>
                ))}
                <TreeRow className="pl-[5px]">
                  <Expander minus />
                  <span className="h-px w-[5px] bg-[#c8c8c8]" />
                  <SignalDiamond />
                  <span className="ml-[5px]">/DDC3_8_tb/out</span>
                </TreeRow>
                {bits.map((b, i) => (
                  <TreeRow key={b} className="pl-[29px]">
                    <div className={`h-full w-[9px] shrink-0 ${i < 7 ? 'border-l border-[#d0d0d0]' : ''}`}>
                      <div className={`h-[9px] border-b border-[#d0d0d0] ${i < 7 ? '' : 'border-l'}`} />
                    </div>
                    <SignalDiamond />
                    <span className="ml-[5px]">{b}</span>
                  </TreeRow>
                ))}
                <div className="relative ml-[2px] h-px w-[144px] bg-black">
                  <svg width="6" height="9" viewBox="0 0 6 9" className="absolute -top-[4px] left-0">
                    <path d="M.5.5l5 4-5 4z" fill="#808080" stroke="#000" />
                  </svg>
                </div>
              </div>
            </div>
            <div className="ml-[2px] flex w-[102px] shrink-0 flex-col border-r border-[#505050] bg-white">
              <div className="flex h-[20px] shrink-0 items-center justify-end bg-[#808080] pr-[5px] tracking-[-0.3px] text-[#e8e8e8]">
                Msgs
              </div>
              <div className="h-[2px] shrink-0 bg-white" />
              <div className="flex-1 bg-[#808080] pt-[2px] pl-[2px] tracking-[-0.3px] text-[#efefef]">
                {['0', '0', '0', '00000001', 'St0', 'St0', 'St0', 'St0', 'St0', 'St0', 'St0', 'St1'].map((v, i) => (
                  <TreeRow key={i}>{v}</TreeRow>
                ))}
                <div className="h-px w-[94px] bg-black" />
              </div>
            </div>
            <div className="relative min-w-0 flex-1">
              <WavePlot />
              <span className="absolute top-[360px] left-[876px] text-[16px] whitespace-nowrap text-[#8f8f8f]">
                https://blog.csdn.net/sinat_41653350
              </span>
            </div>
          </div>
        </div>
      </div>
    </div>
  );
}
